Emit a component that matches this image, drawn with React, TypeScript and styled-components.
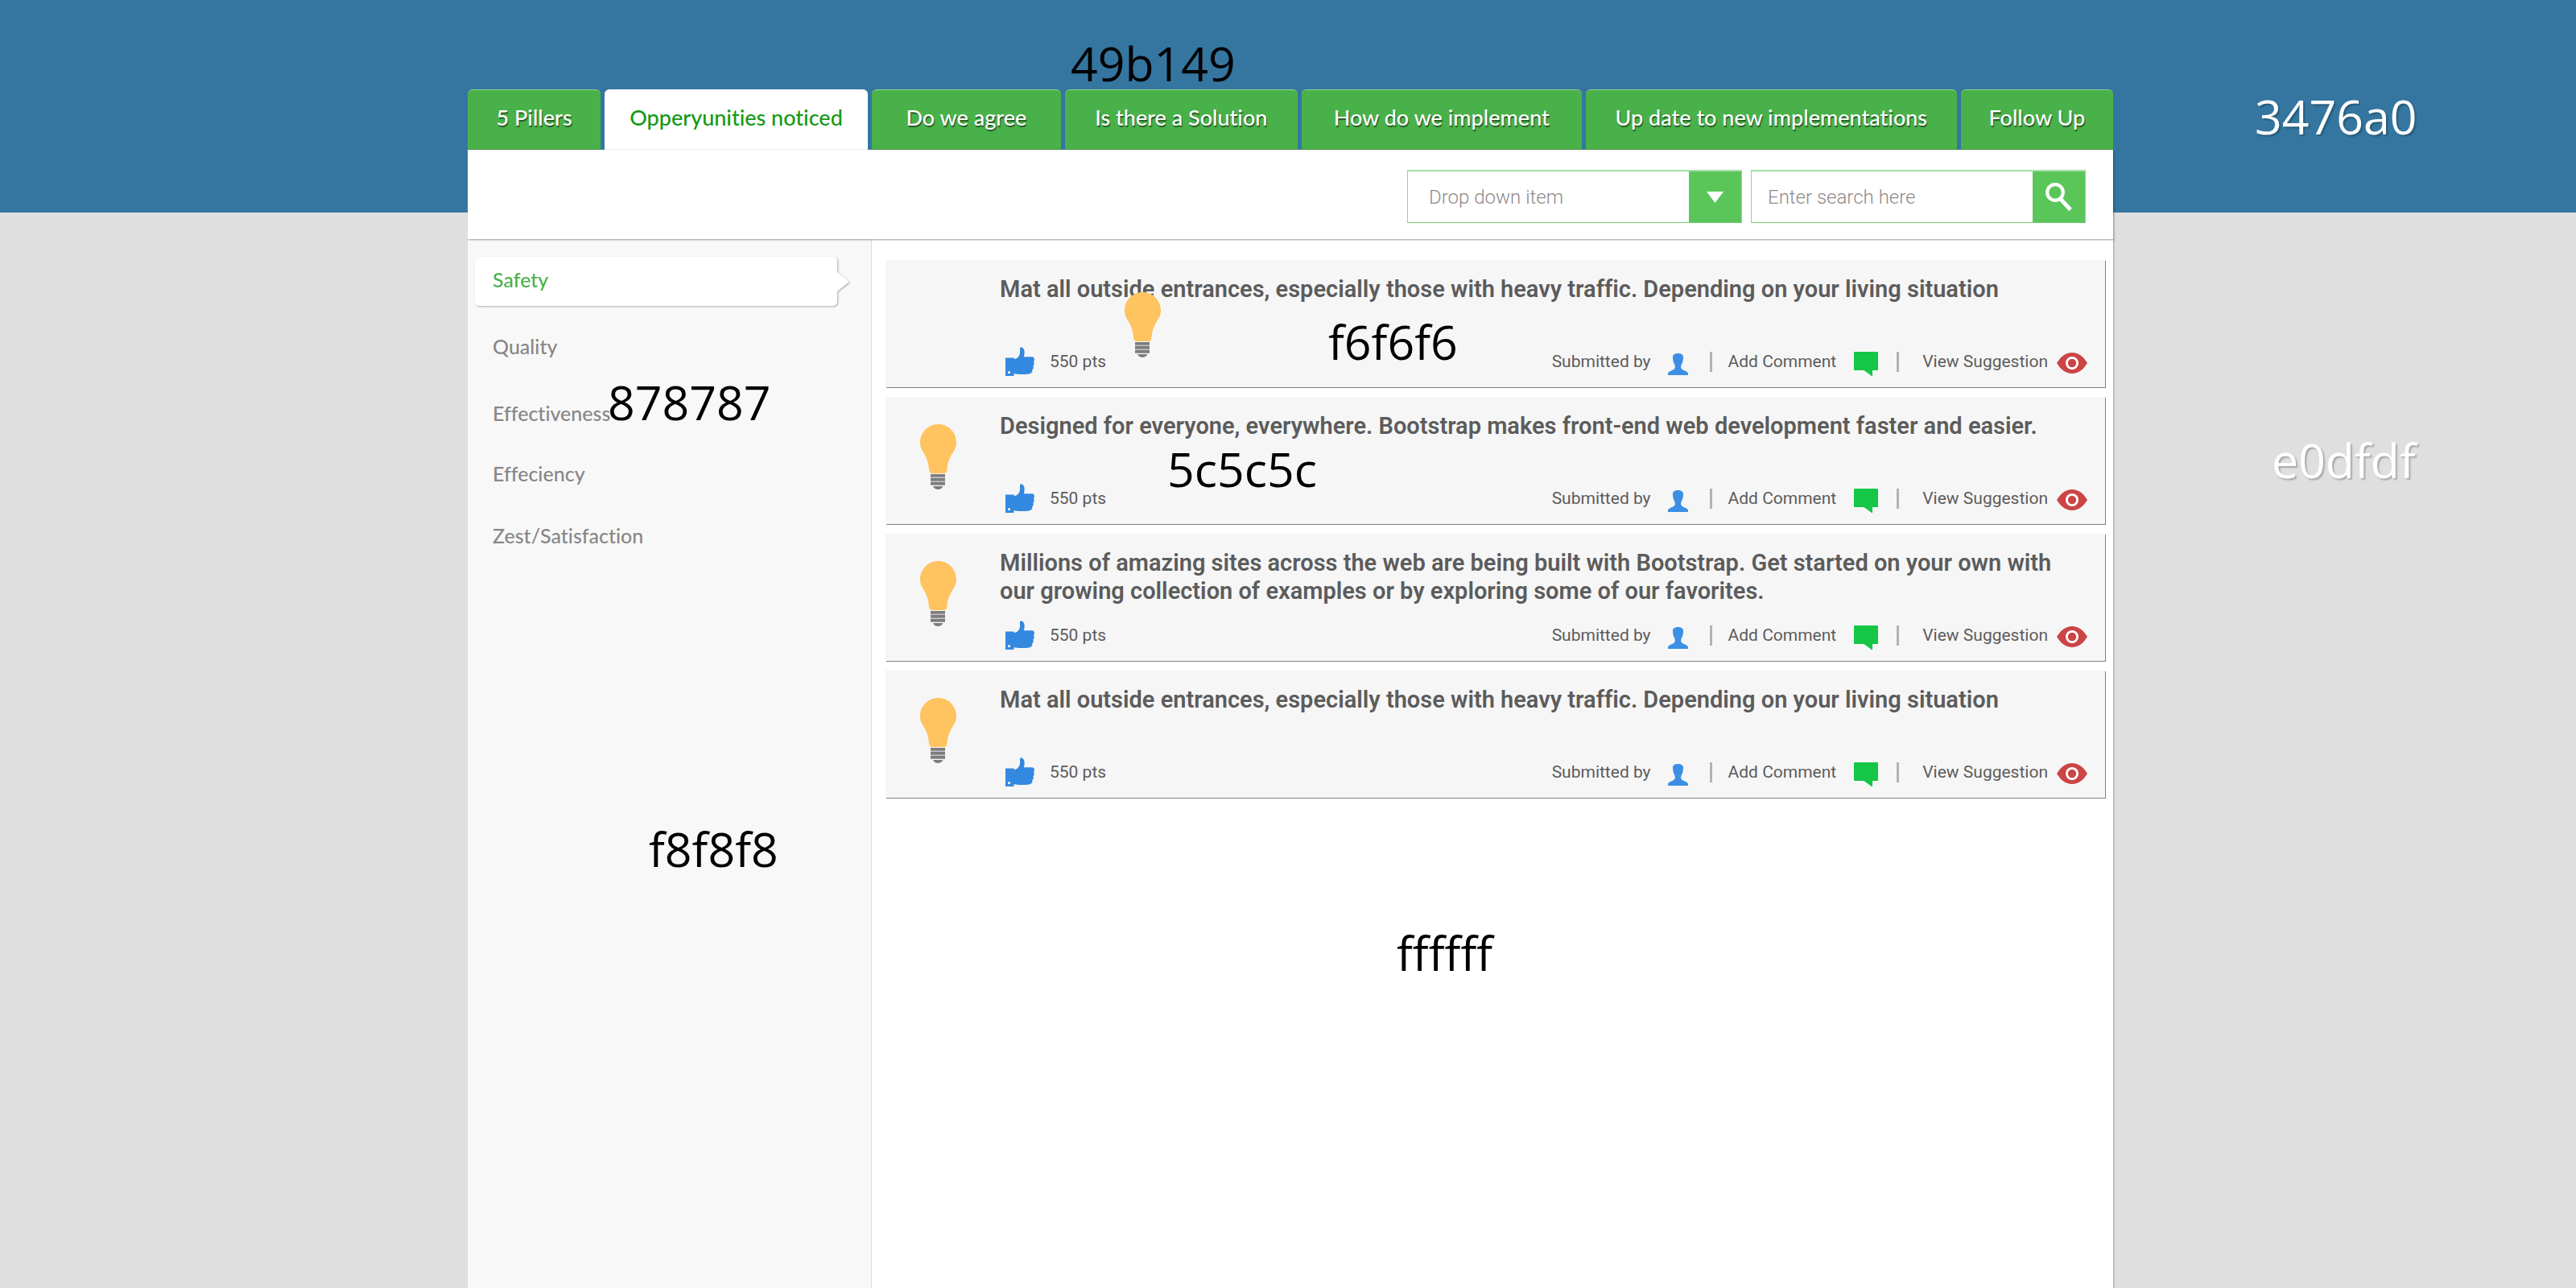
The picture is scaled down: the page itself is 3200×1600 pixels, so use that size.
import React from "react";
import styled, { createGlobalStyle, css } from "styled-components";

const color = {
  blue: "#3476a0",
  green: "#49b149",
  control: "#5ac65a",
  backdrop: "#dfdfdf",
  sidebar: "#f8f8f8",
  card: "#f6f6f6",
  text: "#5c5c5c",
  muted: "#878787",
};

const heading = `Lato, "Open Sans", sans-serif`;
const body = `Roboto, "Open Sans", sans-serif`;

const GlobalStyle = createGlobalStyle`
  *, *::before, *::after { box-sizing: border-box; }
  body { margin: 0; background: ${color.backdrop}; font-family: ${body}; font-variant-ligatures: none; }
  button, input, select { font: inherit; font-variant-ligatures: none; color: inherit; border: 0; background: none; padding: 0; margin: 0; }
  button { cursor: pointer; }
`;

const Page = styled.div`
  position: relative;
  display: grid;
  grid-template-columns: 581fr 2044fr 575fr;
  min-height: 100vh;
  overflow: hidden;
  background: linear-gradient(${color.blue} 264px, ${color.backdrop} 264px);
`;

const Shell = styled.div`
  grid-column: 2;
  min-width: 0;
  display: flex;
  flex-direction: column;
  padding-top: 111px;
`;

const Tabs = styled.nav`
  display: flex;
  gap: 5px;
  height: 75px;
`;

const Tab = styled.button<{ $grow: number; $active?: boolean }>`
  flex: ${(p) => p.$grow} 1 0;
  min-width: 0;
  padding-bottom: 6px;
  border-top: 1px solid #8fd08f;
  border-bottom: 1px solid #3f973f;
  border-radius: 6px 6px 0 0;
  background: ${color.green};
  color: #fff;
  font-family: ${heading};
  font-size: 27px;
  font-weight: 500;
  line-height: 32px;
  white-space: nowrap;
  text-shadow: 1px 2px 1px rgba(0, 0, 0, 0.5);
  ${(p) =>
    p.$active &&
    css`
      border-color: #fff #fff #f4f4f4;
      background: #fff;
      color: #149914;
      text-shadow: none;
    `}
`;

const Toolbar = styled.form`
  position: relative;
  z-index: 1;
  display: flex;
  justify-content: flex-end;
  gap: 11px;
  padding: 25px 34px 20px;
  background: #fff;
  box-shadow: 1px 1px 2px rgba(0, 0, 0, 0.4);
`;

const Field = styled.div`
  display: flex;
  width: 416px;
  height: 66px;
  border: 1px solid #8fda8f;
  border-top: 2px solid #a5dfa5;
  border-bottom-color: #6ecb6e;
  background: #fff;
  color: #8f8a8a;
  font-size: 24px;
  font-weight: 300;
`;

const Select = styled.select`
  flex: 1;
  min-width: 0;
  padding-left: 26px;
  appearance: none;
  outline: 0;
`;

const SearchInput = styled.input`
  flex: 1;
  min-width: 0;
  padding-left: 20px;
  outline: 0;
  &::placeholder { color: inherit; opacity: 1; }
`;

const FieldButton = styled.button`
  display: flex;
  align-items: center;
  justify-content: center;
  width: 65px;
  background: ${color.control};
`;

const Panel = styled.div`
  flex: 1;
  display: grid;
  grid-template-columns: 502fr 1542fr;
  background: #fff;
  box-shadow: 1px 0 2px rgba(0, 0, 0, 0.3);
`;

const Sidebar = styled.nav`
  position: relative;
  display: flex;
  flex-direction: column;
  padding: 22px 42px 0 9px;
  border-right: 1px solid #dcdcdc;
  background: ${color.sidebar};
`;

const Category = styled.button<{ $space?: number; $active?: boolean }>`
  position: relative;
  height: 61px;
  margin-top: ${(p) => p.$space ?? 0}px;
  padding: 0 22px 6px;
  border-radius: 5px;
  color: ${color.muted};
  font-family: ${heading};
  font-size: 25px;
  font-weight: 500;
  line-height: 32px;
  text-align: left;
  ${(p) =>
    p.$active &&
    css`
      background: #fff;
      color: ${color.green};
      filter: drop-shadow(1px 1px 1px rgba(0, 0, 0, 0.3));
      &::after {
        content: "";
        position: absolute;
        left: 100%;
        top: 19px;
        border: 12px solid transparent;
        border-left: 15px solid #fff;
        border-right: 0;
      }
    `}
`;

const Feed = styled.main`
  position: relative;
  display: flex;
  flex-direction: column;
  gap: 12px;
  padding: 26px 10px 26px 17px;
`;

const Card = styled.article`
  position: relative;
  display: grid;
  grid-template-columns: 142px 1fr;
  min-height: 158px;
  background: ${color.card};
  box-shadow: 1px 1px 0 #808080;
  color: ${color.text};
`;

const BulbCell = styled.div`
  padding: 34px 0 0 43px;
`;

const LooseBulb = styled.div`
  position: absolute;
  left: 297px;
  top: 40px;
  line-height: 0;
`;

const CardBody = styled.div`
  display: flex;
  flex-direction: column;
  justify-content: space-between;
  padding: 19px 22px 14px 0;
`;

const Title = styled.h2`
  margin: 0;
  font-size: 29px;
  font-weight: 600;
  line-height: 35px;
`;

const Footer = styled.div`
  display: flex;
  align-items: center;
  height: 36px;
  padding-left: 7px;
  font-size: 21px;
  line-height: 26px;
  white-space: nowrap;
  svg { display: block; flex: none; }
`;

const Action = styled.button<{ $gap: number }>`
  display: flex;
  align-items: center;
  gap: ${(p) => p.$gap}px;
`;

const Author = styled.span`
  display: flex;
  align-items: center;
  gap: 21px;
  margin-left: auto;
`;

const Divider = styled.span<{ $before: number; $after: number }>`
  width: 3px;
  height: 25px;
  margin: 0 ${(p) => p.$after}px 0 ${(p) => p.$before}px;
  background: #b2b2b2;
`;

const Swatch = styled.span<{ $left: number; $top: number; $light?: boolean }>`
  position: absolute;
  z-index: 2;
  left: ${(p) => p.$left}px;
  top: ${(p) => p.$top}px;
  color: ${(p) => (p.$light ? "#fff" : "#000")};
  font-family: "Open Sans", "Noto Sans", sans-serif;
  font-size: 59px;
  line-height: 78px;
  white-space: nowrap;
  text-shadow: ${(p) => (p.$light ? "2px 2px 2px rgba(0, 0, 0, 0.25)" : "none")};
`;

const BulbIcon = () => (
  <svg width="45" height="81" viewBox="0 0 45 81" aria-hidden="true">
    <path fill="#ffc35f" d="M22.500 0C10 0 0 10 0 22.500C0 35 9.500 36 11 56Q11.500 61 15 61H30Q33 61 33.500 56C35.500 36 45 35 45 22.500C45 10 35 0 22.500 0Z" />
    <path fill="#c4c4c4" d="M13 62H31V76H13Z" />
    <path fill="#7d7d7d" d="M13 62H31V65.500H13ZM13 67H31V70.500H13ZM13 72H31V75.500H13ZM16 77H28.500Q26.500 81 22 81Q18 81 16 77Z" />
  </svg>
);

const ThumbIcon = () => (
  <svg width="36" height="36" viewBox="0 0 36 36" aria-hidden="true">
    <path
      fill="#3388e0"
      fillRule="evenodd"
      d="M0 13.500H10.500L11 15C15 15 17.500 11 18 7.500C18.300 4.500 17.500 2 18.500 .5C19.500-.5 22.500 1 23.300 4C24 7 23.500 10 22.800 12.200H33C36 12.300 36.800 16 35 18.200C36.200 20 35.800 22.200 34.300 23.500C35.200 25.500 34.800 27.200 33.200 28.200C34 31 32.500 33 29 33.500C22 34.500 14 34 10.500 33V36H0ZM4.500 30A1.600 1.600 0 1 0 4.500 33.200A1.600 1.600 0 1 0 4.500 30Z"
    />
  </svg>
);

const UserIcon = () => (
  <svg width="25" height="36" viewBox="0 0 25 36" aria-hidden="true">
    <path
      fill="#3c8fe4"
      d="M12.500 8C16.500 8 19 9.500 19 12.500C19 15.500 18.500 19 17 21.500C16 23 16 25 16.500 26.500C18 29.500 24.500 29.500 25 33V35H0V33C.5 29.500 7 29.500 8.500 26.500C9 25 9 23 8 21.500C6.500 19 6 15.500 6 12.500C6 9.500 8.500 8 12.500 8Z"
    />
  </svg>
);

const CommentIcon = () => (
  <svg width="30" height="36" viewBox="0 0 30 36" aria-hidden="true">
    <path fill="#15c647" d="M1 6H29Q30 6 30 7V28Q30 29 29 29H23V36H22L12.500 29H1Q0 29 0 28V7Q0 6 1 6Z" />
  </svg>
);

const EyeIcon = () => (
  <svg width="38" height="36" viewBox="0 0 38 36" aria-hidden="true">
    <path fill="#cb4446" d="M0 20C5 12 11 7 19 7C27 7 33 12 38 20C33 28 27 33 19 33C11 33 5 28 0 20Z" />
    <circle cx="19" cy="20" r="8" fill="#fff" />
    <circle cx="19" cy="20" r="5.200" fill="#cb4446" />
  </svg>
);

const ArrowIcon = () => (
  <svg width="21" height="14" viewBox="0 0 21 14" aria-hidden="true">
    <path fill="#fff" d="M0 0H21L10.500 14Z" />
  </svg>
);

const SearchIcon = () => (
  <svg width="34" height="35" viewBox="0 0 34 35" aria-hidden="true">
    <circle cx="12" cy="12" r="9.800" fill="none" stroke="#fff" strokeWidth="4.200" />
    <path stroke="#fff" strokeWidth="5" d="M18.500 20L31 33.500" />
  </svg>
);

const tabs = [
  { label: "5 Pillers", grow: 165 },
  { label: "Opperyunities noticed", grow: 326 },
  { label: "Do we agree", grow: 235 },
  { label: "Is there a Solution", grow: 288 },
  { label: "How do we implement", grow: 348 },
  { label: "Up date to new implementations", grow: 460 },
  { label: "Follow Up", grow: 189 },
];

const categories = [
  { label: "Safety", space: 0 },
  { label: "Quality", space: 22 },
  { label: "Effectiveness", space: 22 },
  { label: "Effeciency", space: 14 },
  { label: "Zest/Satisfaction", space: 16 },
];

const entrances =
  "Mat all outside entrances, especially those with heavy traffic. Depending on your living situation";

const suggestions = [
  { title: entrances, looseBulb: true, swatch: { label: "f6f6f6", left: 550, top: 62 } },
  {
    title:
      "Designed for everyone, everywhere. Bootstrap makes front-end web development faster and easier.",
    swatch: { label: "5c5c5c", left: 350, top: 50 },
  },
  {
    title:
      "Millions of amazing sites across the web are being built with Bootstrap. Get started on your own with our growing collection of examples or by exploring some of our favorites.",
  },
  { title: entrances },
];

export default function App() {
  return (
    <>
      <GlobalStyle />
      <Page>
        <Shell>
          <Tabs aria-label="Steps">
            {tabs.map((tab, i) => (
              <Tab key={tab.label} type="button" $grow={tab.grow} $active={i === 1}>
                {tab.label}
              </Tab>
            ))}
          </Tabs>
          <Toolbar onSubmit={(e) => e.preventDefault()}>
            <Field>
              <Select aria-label="Filter">
                <option>Drop down item</option>
              </Select>
              <FieldButton type="button" aria-label="Open list">
                <ArrowIcon />
              </FieldButton>
            </Field>
            <Field>
              <SearchInput type="text" aria-label="Search" placeholder="Enter search here" />
              <FieldButton type="submit" aria-label="Search">
                <SearchIcon />
              </FieldButton>
            </Field>
          </Toolbar>
          <Panel>
            <Sidebar aria-label="Categories">
              {categories.map((c, i) => (
                <Category key={c.label} type="button" $space={c.space} $active={i === 0}>
                  {c.label}
                </Category>
              ))}
              <Swatch $left={174} $top={163}>878787</Swatch>
              <Swatch $left={225} $top={718}>f8f8f8</Swatch>
            </Sidebar>
            <Feed>
              {suggestions.map((s, i) => (
                <Card key={i}>
                  <BulbCell>{!s.looseBulb && <BulbIcon />}</BulbCell>
                  <CardBody>
                    <Title>{s.title}</Title>
                    <Footer>
                      <Action type="button" $gap={19}>
                        <ThumbIcon />
                        550 pts
                      </Action>
                      <Author>
                        Submitted by
                        <UserIcon />
                      </Author>
                      <Divider $before={27} $after={20} />
                      <Action type="button" $gap={22}>
                        Add Comment
                        <CommentIcon />
                      </Action>
                      <Divider $before={23} $after={29} />
                      <Action type="button" $gap={11}>
                        View Suggestion
                        <EyeIcon />
                      </Action>
                    </Footer>
                  </CardBody>
                  {s.looseBulb && (
                    <LooseBulb>
                      <BulbIcon />
                    </LooseBulb>
                  )}
                  {s.swatch && (
                    <Swatch $left={s.swatch.left} $top={s.swatch.top}>
                      {s.swatch.label}
                    </Swatch>
                  )}
                </Card>
              ))}
              <Swatch $left={652} $top={847}>ffffff</Swatch>
            </Feed>
          </Panel>
        </Shell>
        <Swatch $left={1330} $top={39}>49b149</Swatch>
        <Swatch $light $left={2801} $top={105}>3476a0</Swatch>
        <Swatch $light $left={2822} $top={532}>e0dfdf</Swatch>
      </Page>
    </>
  );
}
